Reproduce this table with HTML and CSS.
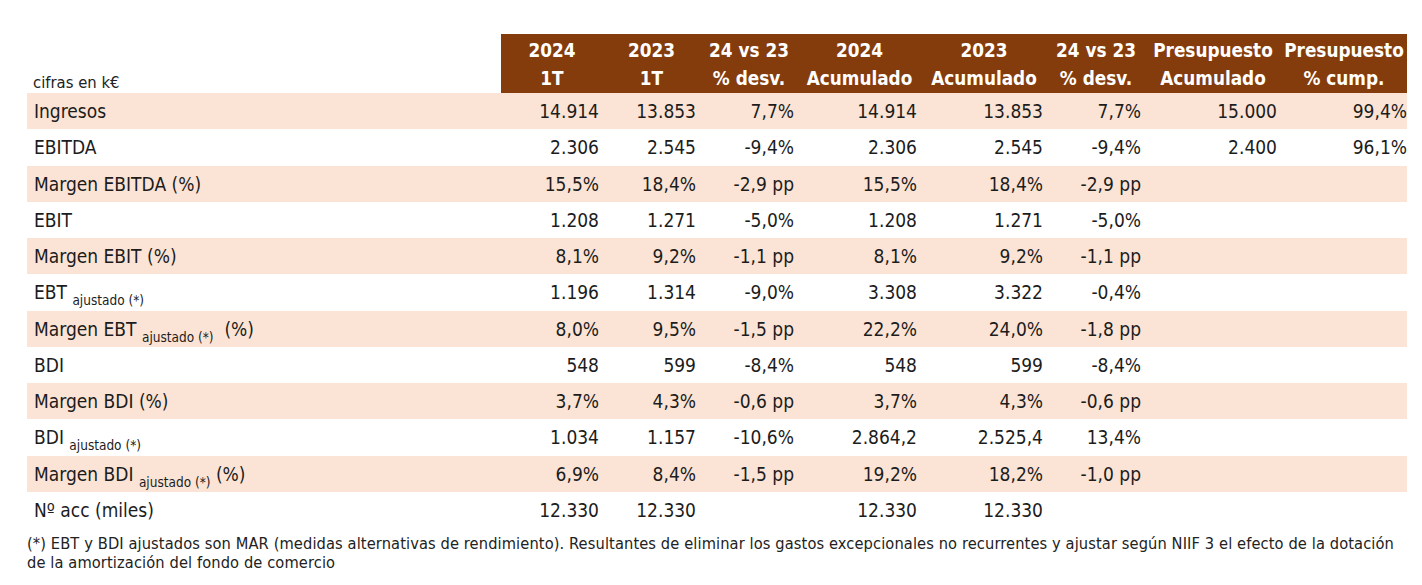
FILE: index.html
```html
<!DOCTYPE html>
<html lang="es">
<head>
<meta charset="utf-8">
<title>Resultados 1T 2024</title>
<link rel="stylesheet" href="styles.css">
</head>
<body>
<div class="page">
  <table class="fin">
    <colgroup>
      <col class="c-label"><col class="c1"><col class="c2"><col class="c3"><col class="c4"><col class="c5"><col class="c6"><col class="c7"><col class="c8">
    </colgroup>
    <thead>
      <tr>
        <th class="units">cifras en k€</th>
        <th>2024<br>1T</th>
        <th>2023<br>1T</th>
        <th>24 vs 23<br>% desv.</th>
        <th>2024<br>Acumulado</th>
        <th>2023<br>Acumulado</th>
        <th>24 vs 23<br>% desv.</th>
        <th>Presupuesto<br>Acumulado</th>
        <th class="last">Presupuesto<br>% cump.</th>
      </tr>
    </thead>
    <tbody>
      <tr class="alt"><td>Ingresos</td><td>14.914</td><td>13.853</td><td>7,7%</td><td>14.914</td><td>13.853</td><td>7,7%</td><td>15.000</td><td class="last">99,4%</td></tr>
      <tr><td>EBITDA</td><td>2.306</td><td>2.545</td><td>-9,4%</td><td>2.306</td><td>2.545</td><td>-9,4%</td><td>2.400</td><td class="last">96,1%</td></tr>
      <tr class="alt"><td>Margen EBITDA (%)</td><td>15,5%</td><td>18,4%</td><td>-2,9 pp</td><td>15,5%</td><td>18,4%</td><td>-2,9 pp</td><td></td><td class="last"></td></tr>
      <tr><td>EBIT</td><td>1.208</td><td>1.271</td><td>-5,0%</td><td>1.208</td><td>1.271</td><td>-5,0%</td><td></td><td class="last"></td></tr>
      <tr class="alt"><td>Margen EBIT (%)</td><td>8,1%</td><td>9,2%</td><td>-1,1 pp</td><td>8,1%</td><td>9,2%</td><td>-1,1 pp</td><td></td><td class="last"></td></tr>
      <tr><td>EBT <sub>ajustado (*)</sub></td><td>1.196</td><td>1.314</td><td>-9,0%</td><td>3.308</td><td>3.322</td><td>-0,4%</td><td></td><td class="last"></td></tr>
      <tr class="alt"><td>Margen EBT <sub>ajustado (*)</sub>&nbsp; (%)</td><td>8,0%</td><td>9,5%</td><td>-1,5 pp</td><td>22,2%</td><td>24,0%</td><td>-1,8 pp</td><td></td><td class="last"></td></tr>
      <tr><td>BDI</td><td>548</td><td>599</td><td>-8,4%</td><td>548</td><td>599</td><td>-8,4%</td><td></td><td class="last"></td></tr>
      <tr class="alt"><td>Margen BDI (%)</td><td>3,7%</td><td>4,3%</td><td>-0,6 pp</td><td>3,7%</td><td>4,3%</td><td>-0,6 pp</td><td></td><td class="last"></td></tr>
      <tr><td>BDI <sub>ajustado (*)</sub></td><td>1.034</td><td>1.157</td><td>-10,6%</td><td>2.864,2</td><td>2.525,4</td><td>13,4%</td><td></td><td class="last"></td></tr>
      <tr class="alt"><td>Margen BDI <sub>ajustado (*)</sub> (%)</td><td>6,9%</td><td>8,4%</td><td>-1,5 pp</td><td>19,2%</td><td>18,2%</td><td>-1,0 pp</td><td></td><td class="last"></td></tr>
      <tr><td>Nº acc (miles)</td><td>12.330</td><td>12.330</td><td></td><td>12.330</td><td>12.330</td><td></td><td></td><td class="last"></td></tr>
    </tbody>
  </table>
  <p class="note">(*) EBT y BDI ajustados son MAR (medidas alternativas de rendimiento). Resultantes de eliminar los gastos excepcionales no recurrentes y ajustar según NIIF 3 el efecto de la dotación de la amortización del fondo de comercio</p>
</div>
</body>
</html>
```

FILE: styles.css
```css
html, body {
  margin: 0;
  padding: 0;
  background: #ffffff;
}

body {
  font-family: "DejaVu Sans Condensed", "DejaVu Sans", sans-serif;
  color: #1c1c1c;
}

.page {
  padding: 34px 0 0 27px;
}

.fin {
  border-collapse: collapse;
  table-layout: fixed;
  width: 1380px;
}

.c-label { width: 474px; }
.c1 { width: 102px; }
.c2 { width: 97px; }
.c3 { width: 98px; }
.c4 { width: 123px; }
.c5 { width: 126px; }
.c6 { width: 98px; }
.c7 { width: 136px; }
.c8 { width: 126px; }

.fin th {
  background: #843c0c;
  color: #ffffff;
  font-weight: bold;
  font-size: 18.8px;
  line-height: 28px;
  height: 59px;
  padding: 0;
  text-align: center;
  vertical-align: bottom;
  white-space: nowrap;
  box-sizing: border-box;
}

.fin th.units {
  background: #ffffff;
  color: #222222;
  font-weight: normal;
  font-size: 16.5px;
  line-height: 20px;
  text-align: left;
  padding: 0 0 0 6px;
}

.fin td {
  height: 36.25px;
  padding: 0 4px 0 0;
  font-size: 19px;
  text-align: right;
  vertical-align: middle;
  white-space: nowrap;
  box-sizing: border-box;
}

.fin td:first-child {
  text-align: left;
  padding: 0 0 0 7px;
}

.fin td.last {
  padding-right: 0;
}

.fin tr.alt td {
  background: #fbe4d5;
}

.fin sub {
  font-size: 13.5px;
  vertical-align: -6px;
  line-height: 0;
}

.note {
  margin: 6px 0 0 0;
  width: 1370px;
  font-size: 16.3px;
  letter-spacing: 0.11px;
  line-height: 19px;
  color: #222222;
}
```
